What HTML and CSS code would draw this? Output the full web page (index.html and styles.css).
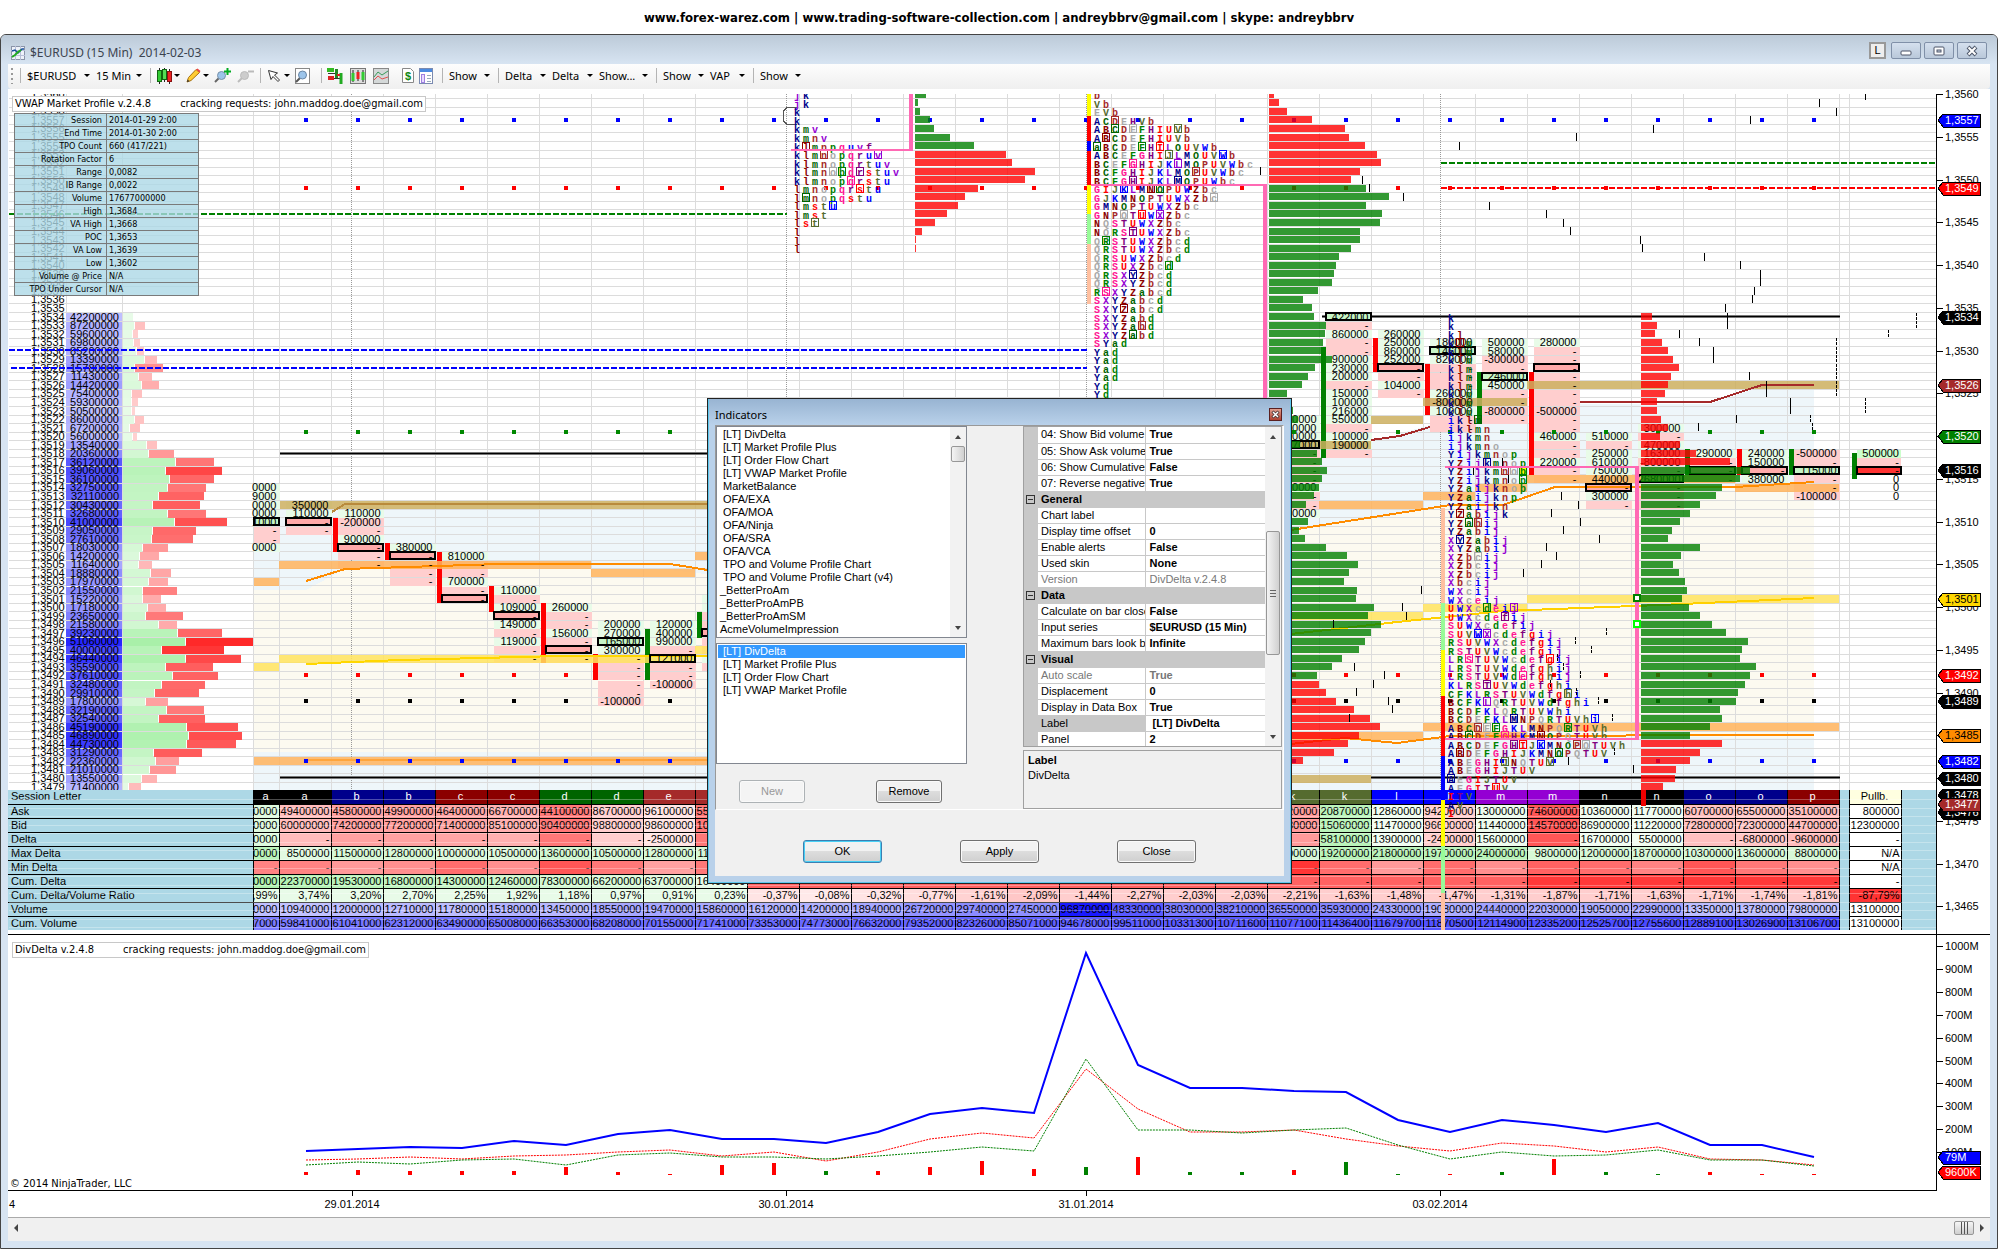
FILE: index.html
```html
<!DOCTYPE html>
<html lang="en">
<head>
<meta charset="utf-8">
<title>$EURUSD (15 Min) 2014-02-03</title>
<link rel="stylesheet" href="styles.css">
</head>
<body>
<header class="banner">www.forex-warez.com | www.trading-software-collection.com | andreybbrv@gmail.com | skype: andreybbrv</header>
<main class="window">
  <div class="titlebar">
    <svg class="app-icon" width="14" height="14" viewBox="0 0 14 14"><rect x=".5" y=".5" width="13" height="13" fill="#eef2fa" stroke="#8a94a8"/><path d="M0 4.500h14M0 9.500h14M4.500 0v14M9.500 0v14" stroke="#b9c0d8"/><path d="M1 5l3-1 3 3 4-4 2 0" stroke="#1a4f9c" stroke-width="1.500" fill="none"/><path d="M1 11l3-2 3-3 3-2" stroke="#22aa22" stroke-width="2" fill="none"/></svg>
    <h1 class="title">$EURUSD (15 Min)&nbsp; 2014-02-03</h1>
    <div class="win-buttons">
      <button class="link-btn" type="button">L</button>
      <button class="win-btn" type="button" aria-label="Minimize"><svg width="12" height="12" viewBox="0 0 12 12"><rect x="1" y="6" width="10" height="4" rx="1" fill="#fff" stroke="#4c5568"/></svg></button>
      <button class="win-btn" type="button" aria-label="Restore"><svg width="12" height="12" viewBox="0 0 12 12"><rect x="1" y="2" width="10" height="8" rx="1" fill="#fff" stroke="#4c5568"/><rect x="4" y="5" width="4" height="2" fill="#c9d6e6" stroke="#4c5568"/></svg></button>
      <button class="win-btn" type="button" aria-label="Close"><svg width="12" height="12" viewBox="0 0 12 12"><path d="M2 2l8 8M10 2l-8 8" stroke="#4c5568" stroke-width="4"/><path d="M2.500 2.500l7 7M9.500 2.500l-7 7" stroke="#fff" stroke-width="2"/></svg></button>
    </div>
  </div>
  <nav class="toolbar">
    <span class="grip"></span><span class="sep"></span>
    <button class="tb w69" type="button">$EURUSD</button>
    <button class="tb w52" type="button">15 Min</button>
    <span class="sep"></span>
    <button class="tb w29" type="button" aria-label="Chart style"><svg width="15" height="16" viewBox="0 0 15 16"><path d="M2.500 0v16M7.500 0v14M12.500 1v15" stroke="#222"/><rect x=".5" y="2.500" width="4" height="11" fill="#3c3" stroke="#161"/><rect x="5.500" y="1.500" width="4" height="10" fill="#5d5" stroke="#161"/><rect x="10.500" y="3.500" width="4" height="10" fill="#e22" stroke="#811"/></svg></button>
    <button class="tb w29" type="button" aria-label="Draw"><svg width="15" height="15" viewBox="0 0 15 15"><path d="M1 14l1.500-4.500L10 1.500l3.500 3L5 12.500z" fill="#fc3" stroke="#a67010"/><path d="M10 1.500l3.500 3 1-1.500-3-2.500z" fill="#e44"/><path d="M1 14l.7-2.500 1.800 1.800z" fill="#333"/></svg></button>
    <button class="tb w23 plain" type="button" aria-label="Zoom in"><svg width="17" height="15" viewBox="0 0 17 15"><path d="M1 14l5-5" stroke="#666" stroke-width="2"/><circle cx="7.500" cy="7.500" r="4" fill="#9cc4ea" stroke="#7890a8"/><path d="M13.500 0v7M10 3.500h7" stroke="#0a2" stroke-width="2"/></svg></button>
    <button class="tb w20 plain" type="button" aria-label="Zoom out"><svg width="17" height="15" viewBox="0 0 17 15"><path d="M1 14l5-5" stroke="#bbb" stroke-width="2"/><circle cx="7.500" cy="7.500" r="4" fill="#ccc" stroke="#bbb"/><path d="M11 3.500h6" stroke="#bbb" stroke-width="2"/></svg></button>
    <span class="sep"></span>
    <button class="tb w29" type="button" aria-label="Cursor"><svg width="14" height="14" viewBox="0 0 14 14"><path d="M1.500 1.500l9 2.500-3 2 5 5-1.500 1.500-5-5-2 3z" fill="#fff" stroke="#333"/></svg></button>
    <button class="tb w23 plain" type="button" aria-label="Data box"><svg width="15" height="16" viewBox="0 0 15 16"><rect x=".5" y=".5" width="14" height="15" fill="#fff" stroke="#888"/><path d="M1 14l4-4" stroke="#555" stroke-width="2"/><circle cx="7.500" cy="7" r="4" fill="#9cc4ea" stroke="#6a86a4"/></svg></button>
    <span class="sep"></span>
    <button class="tb w23 plain" type="button" aria-label="Chart trader"><svg width="16" height="16" viewBox="0 0 16 16"><path d="M1 5.500h9M3 10.500h10" stroke="#333"/><rect x="0" y="0" width="7" height="4" fill="#3b2"/><rect x="1" y="8" width="6" height="4" fill="#d22"/><path d="M9.500 1v9" stroke="#282" stroke-width="3"/><path d="M14 5v11" stroke="#2a2" stroke-width="3"/><path d="M10 7h3" stroke="#d22" stroke-width="2"/></svg></button>
    <button class="tb w23 plain" type="button" aria-label="Data series"><svg width="16" height="16" viewBox="0 0 16 16"><rect x=".5" y=".5" width="15" height="15" fill="#ddd" stroke="#777"/><path d="M3 2v12M8 2v11M13 2v12" stroke="#222"/><rect x="1.500" y="5" width="3" height="8" fill="#3c3"/><rect x="6.500" y="4" width="3" height="7" fill="#e22"/><rect x="11.500" y="4" width="3" height="8" fill="#3c3"/></svg></button>
    <button class="tb w23 plain" type="button" aria-label="Indicators"><svg width="16" height="16" viewBox="0 0 16 16"><rect x=".5" y=".5" width="15" height="15" fill="#d4d8d8" stroke="#888"/><path d="M1 9l4-5 4 3 6-4" stroke="#3a9a5a" fill="none"/><path d="M1 12l4-4 4 3 6-2" stroke="#e05050" fill="none"/></svg></button>
    <button class="tb w23 plain center" type="button" aria-label="Strategies"><svg width="12" height="15" viewBox="0 0 12 15"><path d="M.5.500h8l3 3v11H.5z" fill="#fff" stroke="#888"/><text x="3" y="12" class="dollar">$</text></svg></button>
    <button class="tb w20 plain" type="button" aria-label="Properties"><svg width="14" height="16" viewBox="0 0 14 16"><rect x=".5" y=".5" width="13" height="15" fill="#fff" stroke="#7a8ab0"/><rect x="1" y="1" width="12" height="3" fill="#4a8ae0"/><rect x="2.500" y="6.500" width="3" height="8" fill="#e8dcff" stroke="#a080e0"/><path d="M8 7.500h4M8 10.500h4M8 13.500h4" stroke="#9ab"/></svg></button>
    <span class="sep"></span>
    <button class="tb w47" type="button">Show</button><span class="sep"></span>
    <button class="tb w47" type="button">Delta</button>
    <button class="tb w47" type="button">Delta</button>
    <button class="tb w55" type="button">Show...</button><span class="sep"></span>
    <button class="tb w47" type="button">Show</button>
    <button class="tb w41" type="button">VAP</button><span class="sep"></span>
    <button class="tb w47" type="button">Show</button>
  </nav>

  <section class="chart">
    <div class="plots">
      <div class="price-panel">
        <svg id="price" class="canvas"></svg>
        <div class="tag tag-top">VWAP Market Profile v.2.4.8<span>cracking requests: john.maddog.doe@gmail.com</span></div>
        <table class="info">
          <tr><th>Session</th><td>2014-01-29 2:00</td></tr>
          <tr><th>End Time</th><td>2014-01-30 2:00</td></tr>
          <tr><th>TPO Count</th><td>660 (417/221)</td></tr>
          <tr><th>Rotation Factor</th><td>6</td></tr>
          <tr><th>Range</th><td>0,0082</td></tr>
          <tr><th>IB Range</th><td>0,0022</td></tr>
          <tr><th>Volume</th><td>17677000000</td></tr>
          <tr><th>High</th><td>1,3684</td></tr>
          <tr><th>VA High</th><td>1,3668</td></tr>
          <tr><th>POC</th><td>1,3653</td></tr>
          <tr><th>VA Low</th><td>1,3639</td></tr>
          <tr><th>Low</th><td>1,3602</td></tr>
          <tr><th>Volume @ Price</th><td>N/A</td></tr>
          <tr><th>TPO Under Cursor</th><td>N/A</td></tr>
        </table>
      </div>
      <div class="table-panel">
        <table id="stats" class="stats"></table>
        <svg id="overlay" class="canvas over"></svg>
      </div>
      <div class="delta-panel">
        <svg id="delta" class="canvas"></svg>
        <div class="tag tag-low">DivDelta v.2.4.8<span>cracking requests: john.maddog.doe@gmail.com</span></div>
        <p class="copyright">© 2014 NinjaTrader, LLC</p>
      </div>
    </div>
    <svg id="axis" class="axis"></svg>
  </section>
  <div class="dates"><svg id="dates" class="canvas"></svg></div>
  <div class="hscroll"><span class="arrow left"></span><span class="thumb"></span><span class="arrow right"></span></div>

  <section class="dialog" role="dialog" aria-label="Indicators">
    <div class="dialog-title"><h2>Indicators</h2><button class="dlg-close" type="button" aria-label="Close"><svg width="9" height="9" viewBox="0 0 9 9"><path d="M1.500 1.500l6 6M7.500 1.500l-6 6" stroke="#433" stroke-width="3"/><path d="M2 2l5 5M7 2l-5 5" stroke="#fff" stroke-width="1.500"/></svg></button></div>
    <div class="dialog-body">
      <div class="dialog-top">
        <div class="lists">
          <div class="list list-all">
            <ul>
              <li>[LT] DivDelta</li><li>[LT] Market Profile Plus</li><li>[LT] Order Flow Chart</li><li>[LT] VWAP Market Profile</li><li>MarketBalance</li><li>OFA/EXA</li><li>OFA/MOA</li><li>OFA/Ninja</li><li>OFA/SRA</li><li>OFA/VCA</li><li>TPO and Volume Profile Chart</li><li>TPO and Volume Profile Chart (v4)</li><li class="flush">_BetterProAm</li><li class="flush">_BetterProAmPB</li><li class="flush">_BetterProAmSM</li><li class="flush">AcmeVolumeImpression</li>
            </ul>
            <div class="vscroll"><span class="up"></span><span class="vthumb small"></span><span class="down"></span></div>
          </div>
          <div class="list list-used">
            <ul><li class="selected">[LT] DivDelta</li><li>[LT] Market Profile Plus</li><li>[LT] Order Flow Chart</li><li>[LT] VWAP Market Profile</li></ul>
          </div>
          <div class="list-actions"><button class="btn" type="button" disabled>New</button><button class="btn" type="button">Remove</button></div>
        </div>
        <div class="props">
          <div class="grid-box">
            <table class="grid">
              <tr><td class="gut"></td><th>04: Show Bid volume</th><td>True</td></tr>
              <tr><td class="gut"></td><th>05: Show Ask volume</th><td>True</td></tr>
              <tr><td class="gut"></td><th>06: Show Cumulative</th><td>False</td></tr>
              <tr><td class="gut"></td><th>07: Reverse negative</th><td>True</td></tr>
              <tr class="cat"><td class="gut"><i></i></td><th colspan="2">General</th></tr>
              <tr><td class="gut"></td><th>Chart label</th><td></td></tr>
              <tr><td class="gut"></td><th>Display time offset</th><td>0</td></tr>
              <tr><td class="gut"></td><th>Enable alerts</th><td>False</td></tr>
              <tr><td class="gut"></td><th>Used skin</th><td>None</td></tr>
              <tr class="off"><td class="gut"></td><th>Version</th><td class="thin">DivDelta v.2.4.8</td></tr>
              <tr class="cat"><td class="gut"><i></i></td><th colspan="2">Data</th></tr>
              <tr><td class="gut"></td><th>Calculate on bar close</th><td>False</td></tr>
              <tr><td class="gut"></td><th>Input series</th><td>$EURUSD (15 Min)</td></tr>
              <tr><td class="gut"></td><th>Maximum bars look back</th><td>Infinite</td></tr>
              <tr class="cat"><td class="gut"><i></i></td><th colspan="2">Visual</th></tr>
              <tr class="off"><td class="gut"></td><th>Auto scale</th><td>True</td></tr>
              <tr><td class="gut"></td><th>Displacement</th><td>0</td></tr>
              <tr><td class="gut"></td><th>Display in Data Box</th><td>True</td></tr>
              <tr class="cur"><td class="gut"></td><th>Label</th><td>&nbsp;[LT] DivDelta</td></tr>
              <tr><td class="gut"></td><th>Panel</th><td>2</td></tr>
            </table>
            <div class="vscroll"><span class="up"></span><span class="vthumb long"></span><span class="down"></span></div>
          </div>
          <div class="help"><b>Label</b><p>DivDelta</p></div>
        </div>
      </div>
      <div class="dialog-actions"><button class="btn wide default" type="button">OK</button><button class="btn wide" type="button">Apply</button><button class="btn wide" type="button">Close</button></div>
    </div>
  </section>
</main>
<script src="chart.js"></script>
</body>
</html>
```
FILE: styles.css
```css
* { box-sizing: border-box; }
body { margin: 0; background: #fff; color: #000; font: 11px/13px "Liberation Sans", Arial, sans-serif; overflow: hidden; }
button { font: inherit; color: inherit; padding: 0; margin: 0; }
h1, h2, p, ul { margin: 0; padding: 0; font-weight: normal; }
.banner { height: 34px; padding-top: 8px; text-align: center; font: bold 13px/20px "DejaVu Sans Condensed", "DejaVu Sans", sans-serif; }

.window { position: relative; height: calc(100vh - 34px); min-height: 1215px; display: flex; flex-direction: column; padding: 0 7px 7px; background: #d7e4f2; border: 1px solid #444; border-radius: 6px 6px 0 0; overflow: hidden; }
.titlebar { height: 29px; flex: none; display: flex; align-items: center; gap: 5px; margin: 0 -7px; padding: 6px 10px 0 10px; background: linear-gradient(#bccad8, #d7e4f2); }
.title { flex: 1; font: 12px/16px "Noto Sans", sans-serif; color: #3c4450; }
.win-buttons { display: flex; gap: 3px; margin-bottom: 4px; }
.link-btn { width: 17px; height: 17px; border: 2px solid #999; background: #eee; margin-right: 2px; }
.win-btn { width: 30px; height: 17px; display: flex; align-items: center; justify-content: center; border: 1px solid #8090a8; border-radius: 2px; background: linear-gradient(#d5e0ee, #b9c8da); }

.toolbar { height: 25px; flex: none; display: flex; align-items: center; background: linear-gradient(#fdfdfd, #efefef); border-radius: 0 0 4px 4px; padding: 0 0 2px 3px; }
.grip { width: 2px; height: 16px; background: repeating-linear-gradient(#999 0 2px, transparent 2px 5px); margin-right: 4px; }
.sep { width: 1px; height: 15px; background: #b4b4b4; margin: 0 5px 0 3px; }
.tb { display: flex; align-items: center; justify-content: space-between; height: 20px; border: 0; background: none; padding: 0 8px 0 1px; font: 11px/20px "Noto Sans", sans-serif; white-space: nowrap; }
.tb::after { content: ""; border: 3px solid transparent; border-top-color: #000; border-bottom: 0; margin-right: -3px; }
.tb.plain { padding: 0; }
.tb.plain::after { display: none; }
.tb.center { justify-content: center; }
.w20 { width: 20px; } .w23 { width: 23px; } .w29 { width: 29px; } .w41 { width: 41px; } .w47 { width: 47px; } .w52 { width: 52px; } .w55 { width: 55px; } .w69 { width: 69px; }
.dollar { font: bold 11px "Liberation Sans", sans-serif; fill: #181; }

.chart { flex: none; display: flex; background: #fff; padding-top: 5px; }
.plots { flex: 1; min-width: 0; }
.price-panel, .table-panel, .delta-panel, .dates { position: relative; }
.price-panel { height: 696px; }
.table-panel { height: 144px; }
.delta-panel { height: 257px; border-top: 1px solid #000; border-bottom: 1px solid #000; }
.canvas { display: block; width: 100%; height: 100%; }
.over { position: absolute; inset: 0; overflow: visible; pointer-events: none; }
.axis { flex: none; width: 54px; height: 1097px; background: #fff; position: relative; overflow: visible; }
.dates { height: 26px; flex: none; background: #fff; }
.tag { position: absolute; left: 4px; background: #fff; border: 1px solid #c8c8c8; height: 16px; padding: 0 2px; font: 11px/14px "DejaVu Sans Condensed", sans-serif; white-space: nowrap; }
.tag span { margin-left: 29px; }
.tag-top { top: 2px; }
.tag-low { top: 7px; }
.copyright { position: absolute; left: 2px; bottom: 0; font: 11px/13px "DejaVu Sans Condensed", sans-serif; }
.info { position: absolute; left: 6px; top: 19px; width: 185px; border-collapse: collapse; table-layout: fixed; background: rgba(173, 216, 230, .8); font: 9px/12px "DejaVu Sans Condensed", sans-serif; }
.info th, .info td { border: 1px solid #7a7a7a; height: 13px; padding: 0 4px 0 2px; font-weight: normal; }
.info th { width: 92px; text-align: right; }

.stats { width: 100%; border-collapse: collapse; table-layout: fixed; background: #add8e6; line-height: 13px; }
.stats td, .stats th { height: 14px; padding: 0 1px 0 0; border-right: 1px solid #000; border-bottom: 1px solid #000; text-align: right; font-weight: normal; overflow: hidden; white-space: nowrap; }
.stats th { text-align: left; padding-left: 3px; }
.stats tr:last-child td, .stats tr:last-child th { border-bottom: 0; }
.stats .letter { color: #fff; text-align: center; }
.stats .gap { background: #add8e6; border-bottom: 0; }
.stats .rest { border: 0; }
.stats .cut { direction: rtl; }
.stats .pull { text-align: center; background: #ffffe0; }

.hscroll { flex: 1; display: flex; align-items: center; background: #f0f0f0; border-top: 1px solid #aaa; padding: 0 6px 4px; }
.hscroll .thumb { width: 20px; height: 14px; margin-left: auto; margin-right: 6px; border: 1px solid #979797; border-radius: 2px; background: linear-gradient(90deg, transparent 6px, #555 6px 7px, transparent 7px 9px, #555 9px 10px, transparent 10px 12px, #555 12px 13px, transparent 13px), linear-gradient(#f6f6f6, #cfcfcf); }
.arrow { border: 4px solid transparent; }
.arrow.left { border-right-color: #444; border-left: 0; }
.arrow.right { border-left-color: #444; border-right: 0; }

.dialog { position: absolute; left: 50%; margin-left: -292px; top: 363px; width: 585px; height: 486px; padding: 0 7px 7px; border: 1px solid #222; background: #b9d1ea; box-shadow: inset 0 0 0 1px #5cc8ee; display: flex; flex-direction: column; }
.dialog-title { height: 26px; flex: none; display: flex; align-items: center; justify-content: space-between; margin: 0 -6px; padding: 5px 8px 0 6px; background: linear-gradient(#98b4d2, #b9d1ea); font: 11px/16px "Noto Sans", sans-serif; }
.dialog-title h2 { font-size: 11px; }
.dlg-close { width: 13px; height: 13px; display: flex; align-items: center; justify-content: center; border: 1px solid #5a2020; background: linear-gradient(#e0a090, #b04030); }
.dialog-body { flex: 1; background: #f0f0f0; display: flex; flex-direction: column; }
.dialog-top { height: 385px; display: flex; justify-content: space-between; border: 1px solid #999; border-right-color: #fff; border-bottom-color: #fff; padding-right: 1px; }
.lists { width: 251px; }
.list { display: flex; background: #fff; border: 1px solid #828790; }
.list ul { flex: 1; list-style: none; padding: 1px 0 0 1px; }
.list li { height: 13px; padding-left: 5px; white-space: nowrap; overflow: hidden; }
.list li.flush { padding-left: 2px; }
.list li.selected { background: #3399ff; color: #fff; margin-right: 1px; }
.list-all { height: 212px; }
.list-used { height: 121px; margin-top: 5px; }
.list-actions { display: flex; justify-content: space-between; padding: 16px 25px 0 23px; }
.btn { width: 66px; height: 23px; border: 1px solid #707070; border-radius: 3px; background: linear-gradient(#f2f2f2 50%, #dddddd 50%, #cfcfcf); box-shadow: inset 0 0 0 1px #fafafa; }
.btn:disabled { background: #f4f4f4; border-color: #adb2b5; color: #999; }
.btn.wide { width: 79px; }
.btn.default { border-color: #3c7fb1; box-shadow: inset 0 0 0 1px #48d0f5; }
.vscroll { width: 16px; flex: none; display: flex; flex-direction: column; align-items: center; background: #f2f2f2; padding: 8px 0 7px; }
.vscroll .up, .vscroll .down { border: 3px solid transparent; }
.vscroll .up { border-bottom: 4px solid #444; border-top: 0; }
.vscroll .down { border-top: 4px solid #444; border-bottom: 0; margin-top: auto; }
.vthumb { width: 14px; border: 1px solid #979797; border-radius: 2px; background: linear-gradient(90deg, #f4f4f4, #d0d0d0); }
.vthumb.small { height: 16px; margin-top: 7px; }
.vthumb.long { height: 124px; margin-top: 92px; background: linear-gradient(#666, #666) center 58px / 6px 1px no-repeat, linear-gradient(#666, #666) center 61px / 6px 1px no-repeat, linear-gradient(#666, #666) center 64px / 6px 1px no-repeat, linear-gradient(90deg, #f4f4f4, #d0d0d0); }
.props { width: 259px; display: flex; flex-direction: column; gap: 3px; }
.grid-box { height: 321px; display: flex; border: 1px solid #a0a0a0; overflow: hidden; }
.grid { flex: 1; min-width: 0; width: 100%; border-collapse: collapse; table-layout: fixed; background: #fff; height: 320px; }
.grid td, .grid th { height: 16px; padding: 0 0 0 4px; border-bottom: 1px solid #c8c8c8; text-align: left; white-space: nowrap; overflow: hidden; font-weight: bold; line-height: 15px; }
.grid th { font-weight: normal; padding-left: 3px; border-right: 1px solid #c8c8c8; width: 107px; }
.grid .gut { width: 14px; background: #c8c8c8; padding: 0 0 0 2px; }
.grid .gut i { display: block; width: 9px; height: 9px; border: 1px solid #333; background: linear-gradient(#333, #333) center / 5px 1px no-repeat; }
.grid .cat th, .grid .cur th { background: #c8c8c8; }
.grid .cat th { font-weight: bold; }
.grid .off th, .grid .off td { color: #777; }
.grid .off .thin { font-weight: normal; }
.help { flex: 1; border: 1px solid #a0a0a0; padding: 2px 4px; line-height: 15px; }
.dialog-actions { flex: 1; display: flex; justify-content: center; align-items: center; gap: 78px; padding-top: 17px; }

/* chart drawing */
.num { font: 11px "Liberation Sans", sans-serif; }
.tpo { font: bold 10px "Liberation Mono", monospace; text-anchor: middle; }
.big { font: 11px "Liberation Sans", sans-serif; text-anchor: middle; }
```
FILE: chart.js
```js
const ROW = 8.547, TOP = 94, LEFT = 8;
const y = p => 316.5 + (3534 - p) * ROW;
const el = id => document.getElementById(id);
const rect = (x, yy, w, h, f, o = '') => `<rect x="${x}" y="${yy}" width="${w}" height="${h}" fill="${f}" ${o}/>`;
const cell = (x1, x2, p, f, o = '') => rect(x1, Math.round(y(p) - 3.5), x2 - x1, 8, f, o);
const text = (x, yy, t, cls = 'num', o = '') => `<text x="${x}" y="${yy}" class="${cls}" ${o}>${t}</text>`;
const line = (pts, c, w, o = '') => `<polyline points="${pts}" fill="none" stroke="${c}" stroke-width="${w}" ${o}/>`;
const red = a => `rgb(255,${Math.round(255 - 225 * a)},${Math.round(255 - 225 * a)})`;
const green = a => `rgb(${Math.round(255 - 115 * a)},${Math.round(255 - 20 * a)},${Math.round(255 - 115 * a)})`;
const blue = a => `rgb(${Math.round(255 - 255 * a)},${Math.round(255 - 255 * a)},255)`;
const colX = c => 279.5 + 52 * c;
const TAN = '#cdaf5f', ORANGE = '#ffb35c', GOLD = '#ffe35e', PINK = '#ff69b4';

/* volume ladder on the left: volume, end of bid part, end of ask part */
const ladder = [
[42200000,133,133],[87200000,134,145],[59600000,132,138],[69800000,133,140],[85200000,136,144],[13390000,144,157],[15780000,134,163],[11430000,138,152],[14420000,141,159],[75400000,131,142],[59300000,131,138],[50500000,131,135],[86000000,134,144],[67200000,129,140],[56000000,132,137],[13540000,146,157],[20360000,148,174],[36120000,175,214],[39060000,165,222],[36100000,169,214],[32750000,167,206],[32110000,158,204],[30430000,152,200],[32680000,167,206],[41000000,174,227],[29050000,152,196],[27610000,151,193],[18030000,142,168],[14200000,139,159],[11640000,138,152],[18880000,150,171],[17970000,148,168],[21550000,142,177],[15220000,142,161],[17180000,147,166],[23650000,145,183],[21580000,158,177],[39230000,177,222],[51060000,185,253],[40000000,161,224],[46440000,185,241],[35590000,165,213],[37610000,172,218],[32480000,161,205],[29910000,154,199],[17800000,145,168],[32190000,166,204],[32540000,158,205],[45190000,186,238],[46890000,188,242],[44730000,186,236],[31290000,153,202],[22360000,155,179],[21010000,149,176],[13550000,141,157],[71400000,128,141]];

/* order-flow bars: column, first price, values (* = most traded), bar [colour, from, to] */
const flow = [
[-1,3514,'0000 9000 0000 0000 *1000 - - 0000'],
[0,3512,'350000 110000 *- -'],
[1,3511,'110000 -200000 - 900000 *- - -','red',3510,3507],
[2,3507,'380000 *- - - -','red',3507,3506],
[3,3506,'810000 - - 700000 - *-','red',3506,3501],
[4,3502,'110000 - 109000 *- 149000 - 119000 - -','red',3502,3500],
[5,3500,'260000 - - 156000 - *- -','red',3500,3494],
[6,3498,'200000 270000 *165000 300000 - - - - - -100000','red',3494,3492],
[7,3498,'120000 400000 990000 - *121000 - - -100000','green',3497,3492],
[8,3501,'260000 310000 - - *- - - 110000 -','green',3499,3497],
[19,3522,'110000 200000 310000 *177000 - - - - 100000 - - 240000'],
[20,3534,'*422000 - 860000 - - 900000 230000 200000 - 150000 100000 216000 550000 - 100000 190000 -','green',3530,3518],
[21,3532,'260000 250000 860000 252000 *- - 104000 -','red',3531,3528],
[22,3531,'180000 *146000 820000 - - - 260000 -800000 100000 - -','red',3528,3523],
[23,3531,'500000 580000 -300000 - *246000 450000 - - -800000 -','green',3527,3522],
[24,3531,'280000 - - *- - - - - -500000 - - 460000 - - 220000 - -','red',3527,3516],
[25,3520,'510000 - 250000 610000 750000 440000 *- 300000 -'],
[26,3521,'300000 - 470000 163000 -800000 - *2680000 - - -'],
[27,3518,'290000 - *- -','green',3518,3516],
[28,3518,'240000 150000 *- 380000','red',3518,3516],
[29,3518,'-500000 - *115000 - - -100000','green',3518,3516]];

const tpoColors = ['#00008b','#8b0000','#006400','#a52a2a','#a9a9a9','#008000','#ff1493','#800080','#ff0000','#556b2f','#0000ff','#9400d3'];
const tpoIndex = ch => (ch >= 'a' ? ch.charCodeAt(0) - 71 : ch.charCodeAt(0) - 65) % 12;
const profiles = [
[797,3560,'jk jk k k kmv kmnv k*lmnpquvf klm*nopqru*v klmnopqrtuv klmn*o*pq*rstuv klmnop*qrstu lmnopqr*stu l*mnopqstu lmst*u lmst ls*t l l l'],
[1097,3560,'b Vb EVb AC*DEHVb AB*CD*EFHIU*Vb A*BCDEFHIUVb *aBCDE*FH*ILOUVWb ABCEFGHI*JLMOUV*Wb BCEF*GHIJK*LMOPUVWbc BCFGHIJKLMO*PUVWbc BCFG*HIJKL*MOPUWbc GIJ*KLM*N*OPUWZbc GJKMNOPTUWXZb*c GMNOPTUWXZbc GNP*QT*UW*XZbc NQSTUWXZbc NQRS*TUWXZbc Q*RSTUWXZbcd QRSTUWXZbcd QRSUWXZbcd QRSUXZbc*d QRSX*YZbcd QRSXYZbcd R*SXYZabcd SXYZabcd SXY*Zabcd SXYZabd SXYZa*bd SXYZ*abd SYad Yad Yad Yad Yad Yd Yd'],
[1451,3534,'k k kl k*lm klm klm klm klm klm klm klm klm ikl*m iklmn ijkmn ijkmno Yijkmnop YZij*kmnop YZijkm*n*o*p YZijkmno*p YZaijknop YZaijknp YZaijkn Y*Zabijk YZ*a*bij YZabij X*YZabij XYZabij XZb*cij XZbcij XZbcij Xbcij WXcij WXceij UWXc*dei*j UWXcde*fij SUWXcdefij SUV*W*Xcdefgij RSUVWXcdefgij RSTUVWcdefgij LR*STUVWcdef*gij LRSTUVWdefghij LRSTUVWd*efghij KLRS*TUVWdefghi CFKLRSTUVWdfg*hi BCFK*LQRTUVWdfghi BCDFKLQRTUVWhi BCDEFKL*MNPQRTUVh*i ABC*D*E*FGKLMNPQ*RTUVh AB*CDEF*GHKM*NOPQTUVh ABCDEFG*H*IJ*KMNO*P*QTUVh A*BDEFGHIJKMN*OPQTUV ABEGHI*JNQTU*V ABEGHIJTUV *AEGIJTUV AEGIT*UV ITV AV I']];

/* volume profiles: x, first price, ends of the bars, index range painted green */
const volumes = [
[915,3560,[926,918,920,930,934,950,974,1006,1012,1035,1025,978,965,958,947,935,922,916,916],0,6],
[1269,3560,[1274,1279,1287,1312,1345,1349,1365,1377,1381,1360,1351,1366,1389,1366,1382,1380,1360,1360,1351,1339,1336,1334,1332,1318,1303,1312,1314,1326,1325,1323,1325,1332,1315,1308,1302,1287,1280,1293,1298,1280,1285,1300,1317,1322,1327,1322,1319,1314,1306,1280,1308,1299,1305,1326,1347,1358,1349,1344,1357,1356,1374,1368,1381,1371,1365,1359,1342,1332,1317,1319,1326,1336,1354,1370,1380,1359,1348,1334,1303],11,68],
[1641,3534,[1652,1657,1655,1662,1668,1673,1679,1671,1668,1665,1657,1657,1661,1668,1660,1680,1696,1730,1750,1740,1722,1716,1700,1690,1680,1672,1668,1700,1681,1673,1679,1685,1687,1682,1689,1700,1712,1726,1748,1742,1740,1756,1750,1745,1738,1736,1720,1722,1710,1690,1722,1700,1690,1676,1675,1663],18,49]];

const ticks = [[1865,96],[1819,103],[1836,112],[1750,120],[1653,129],[1576,137],[1546,214],[1563,223],[1570,231],[1640,240],[1642,248],[1704,257],[1740,265],[1760,274],[1760,282],[1754,291],[1752,299],[1725,308],[1727,317],[1727,325],[1679,334],[1699,342],[1713,351],[1713,359],[1749,376],[1766,385],[1766,393],[1790,402],[1790,410],[1736,419],[1698,427],[1260,171],[1362,180],[1369,188],[1403,197],[1489,206],[1459,146],[1502,462],[1473,471],[1508,479],[1561,496],[1578,505],[1551,513],[1580,522],[1563,530],[1599,539],[1546,547],[1556,556],[1541,564],[1523,573],[1421,590],[1402,607],[1406,616],[1333,624],[1354,667],[1384,675],[1373,684],[1356,692],[1388,701],[1392,709],[1349,718],[1568,761],[1633,769]];
const dashes = [[1916,317],[1916,325],[1888,334],[1836,342],[1836,351],[1836,359],[1836,368],[1836,376],[1836,385],[1836,393],[1865,402],[1865,410],[1810,419],[1812,427],[1606,632],[1575,641],[1591,650],[1557,658],[1563,667],[1580,675],[1550,684],[1576,692],[1598,701],[1612,718],[1614,752]];

function gridLines(from, to, color, o) {
  let s = '';
  for (let p = from; p >= to; p--) s += rect(9, Math.round(y(p) + 4), 1928, 1, color, o);
  return s;
}
function columnLines(h) {
  let s = '';
  for (const x of [66, 122, 253, 1849]) s += rect(x, TOP, 1, h, '#dcdcdc');
  for (let c = 0; c <= 30; c++) s += rect(279 + 52 * c, TOP, 1, h, '#dcdcdc');
  return s;
}
function dots(p, color, from = 0, to = 29, skip = []) {
  let s = '';
  for (let k = from; k <= to; k++) if (!skip.includes(k)) s += rect(304 + 52 * k, Math.round(y(p)) - 2, 4, 4, color);
  return s;
}
function profileText([x, first, rows], from, to) {
  let s = '';
  rows.split(' ').forEach((row, i) => {
    const p = first - i;
    if (i < from || i >= to) return;
    let xi = x, boxed = false;
    for (const ch of row) {
      if (ch === '*') { boxed = true; continue; }
      const color = tpoColors[tpoIndex(ch)], yy = Math.round(y(p));
      if (boxed) s += `<rect x="${xi - 3.5}" y="${yy - 3.5}" width="7" height="8" fill="none" stroke="${color}"/>`;
      s += text(xi, yy + 5, ch, 'tpo', `fill="${color}"`);
      xi += 9; boxed = false;
    }
  });
  return s;
}

function drawPrice() {
  let s = '';
  const area = (pts, f) => `<polygon points="${pts}" fill="${f}"/>`;
  /* value areas */
  s += rect(254, 508, 460, 282, '#eef6fa');
  s += area('254,590 306,590 345,569 660,569 714,575 714,752 254,752', '#fcfaf0');
  s += area('1280,448 1371,442 1423,427 1475,410 1579,404 1710,404 1762,386 1814,386 1814,790 1280,790', '#eef6fa');
  s += area('1280,533 1450,505 1503,505 1555,487 1814,487 1814,738 1450,736 1397,743 1345,738 1280,744', '#fcfaf0');
  s += gridLines(3560, 3479, '#dcdcdc') + columnLines(696);
  for (const x of [351, 786, 1086, 1440]) s += `<line x1="${x}.5" x2="${x}.5" y1="94" y2="790" stroke="#999" stroke-dasharray="1 1"/>`;

  for (let p = 3560; p >= 3479; p--) s += text(31, Math.round(y(p)) + 4, '1,' + p);
  ladder.forEach(([v, a, b], i) => {
    const p = 3534 - i, t = (b - 123) / 130;
    s += cell(66, 122, p, blue(.2 + .65 * t)) + cell(123, a, p, green(.15 + .6 * t)) + cell(a + 1, b, p, red(.15 + .8 * (b - a) / 68));
    s += text(119, Math.round(y(p)) + 4, v, 'num', 'text-anchor="end"');
  });
  /* session highs and lows */
  for (const [a, b, yy] of [[280,714,453],[280,714,777],[1322,1840,316],[1371,1840,777]]) s += rect(a, yy - 1, b - a, 3, '#777') + rect(a, yy, b - a, 1, '#000');

  /* footprint cells; their values are drawn over the value-area bands */
  let values = '';
  for (const [c, first, vals, bar, from, to] of flow) {
    const x = colX(c);
    if (bar) s += rect(x + 1, Math.round(y(from) - 4), 5, Math.round((from - to + 1) * ROW), bar);
    vals.split(' ').forEach((v, i) => {
      const p = first - i, poc = v[0] === '*';
      v = v.replace('*', '');
      const neg = v[0] === '-', x1 = c < 0 ? 254 : x + 6;
      s += cell(x1, x + 52, p, neg ? red(poc ? .38 : .22) : green(poc ? .5 : .2));
      if (poc) values += `<rect x="${x1}" y="${Math.round(y(p) - 3.5)}" width="${x + 51 - x1}" height="7" fill="none" stroke="#000" stroke-width="2"/>`;
      values += text(x + 49, Math.round(y(p)) + 4, v, 'num', 'text-anchor="end"');
    });
  }
  const bands = [[280,714,3512,TAN],[254,279,3503,ORANGE],[279,591,3505,ORANGE],[591,695,3504,ORANGE],[695,714,3506,ORANGE],[254,279,3493,GOLD],[279,695,3494,GOLD],[695,714,3495,GOLD],[254,714,3482,ORANGE],
    [1280,1371,3519,TAN],[1371,1423,3522,TAN],[1423,1527,3524,TAN],[1527,1839,3526,TAN],[1319,1423,3512,ORANGE],[1423,1475,3513,ORANGE],[1475,1527,3514,ORANGE],[1527,1735,3515,ORANGE],[1735,1839,3514,ORANGE],
    [1291,1423,3499,GOLD],[1423,1527,3500,GOLD],[1527,1839,3501,GOLD],[1291,1423,3485,ORANGE],[1423,1475,3486,ORANGE],[1475,1527,3485,ORANGE],[1527,1839,3486,ORANGE],[1280,1371,3480,TAN]];
  for (const [a, b, p, f] of bands) s += cell(a, b, p, f, 'opacity=".85"');
  s += line('306,581 345,569 500,564 670,564 714,571', '#ff8c00', 2) + line('306,664 400,660 560,656 714,656', '#ffd700', 2) + line('306,760 714,760', '#ffa53c', 2);
  s += line('332,512 345,504 714,504', '#b98a3c', 2);
  s += line('1291,530 1450,505 1503,505 1555,487 1735,487 1814,482', '#ff8c00', 2) + line('1291,634 1397,622 1503,611 1660,605 1814,598', '#ffd000', 2);
  s += line('1291,744 1345,738 1397,743 1450,736 1814,735', '#ff8c00', 2) + line('1371,440 1400,436 1430,427', '#a52a2a', 2) + line('1580,402 1710,402 1762,385 1814,385', '#a52a2a', 2);
  s += values;
  s += dots(3557, '#00f') + dots(3549, '#f00') + dots(3492, '#f00', 0, 29, [6, 7]) + dots(3489, '#000', 0, 29, [6]) + dots(3482, '#00f') + dots(3520.5, '#080', 0, 29, [20]);

  /* session levels */
  const dash = (a, b, yy, c) => `<line x1="${a}" x2="${b}" y1="${yy}" y2="${yy}" stroke="${c}" stroke-width="2" stroke-dasharray="6 2"/>`;
  s += dash(9, 787, 214, '#008000') + dash(9, 1087, 350, '#00f') + dash(11, 1087, 368, '#00f') + dash(1441, 1936, 163, '#008000') + dash(1441, 1936, 188, '#f00');
  const stripes = [[1087,94,22,'#ff0'],[1087,116,69,'#f00'],[1087,141,10,'#00f'],[1087,185,29,'#ff0'],[1087,214,30,'#98fb98'],[1087,244,60,'#ffc0a0'],
    [1441,508,95,'#ffc0a0'],[1441,603,47,'#98fb98'],[1441,650,46,'#ff0'],[1441,696,60,'#f00'],[1441,756,34,'#00f']];
  for (const [x, yy, h, f] of stripes) s += rect(x, yy, 4, h, f);
  s += `<path d="M797 107.500h-10l-4 4v9l4 4h10" fill="none" stroke="#555"/>`;

  s += rect(1519, 467, 7, 8, '#ff0');
  profiles.forEach(p => s += profileText(p, 0, p[1] - 3478));
  for (const [x, first, ends, g1, g2] of volumes)
    ends.forEach((e, i) => {
      const top = Math.max(94, Math.round(y(first - i) - 3.5));
      s += rect(x, top, e - x, Math.round(y(first - i) - 3.5) + 7 - top, i >= g1 && i <= g2 ? '#008000' : '#f00', 'opacity=".8"');
    });
  for (const [x, yy] of ticks) s += rect(x, yy - 4, 1, 8, '#000');
  for (const [x, yy] of dashes) s += `<line x1="${x}.5" x2="${x}.5" y1="${yy - 4}" y2="${yy + 4}" stroke="#000" stroke-dasharray="3 1"/>`;
  s += line('791,150 911,150', PINK, 2) + line('911,94 911,151', PINK, 4) + line('1091,185 1265,185', PINK, 2) + line('1265,184 1265,420', PINK, 4);
  s += line('1445,467 1637,467', PINK, 2) + line('1637,466 1637,740', PINK, 4) + line('1445,739 1639,739', PINK, 2);
  s += `<rect x="1634" y="595" width="6" height="6" fill="#fff" stroke="#008000" stroke-width="2"/><rect x="1634" y="621" width="6" height="6" fill="#fff" stroke="#0f0" stroke-width="2"/>`;
  /* running pullback bar */
  s += rect(1852, 453, 5, 26, '#008000');
  ['500000', '-', '*-', '0', '0', '0'].forEach((v, i) => {
    const p = 3518 - i, poc = v[0] === '*';
    if (i < 3) s += cell(1857, 1901, p, poc ? '#f33' : i ? '#fcc' : '#cfc');
    if (poc) s += `<rect x="1857" y="${Math.round(y(p) - 3.5)}" width="44" height="7" fill="none" stroke="#000" stroke-width="2"/>`;
    s += text(1899, Math.round(y(p)) + 4, v.replace('*', ''), 'num', 'text-anchor="end"');
  });
  el('price').innerHTML = `<g transform="translate(-${LEFT},-${TOP})" shape-rendering="crispEdges">${s}</g>`;
}

function drawStats() {
  const letters = 'aabbccddeeffgghhiijjkkllmmnnoop'.split('');
  const letterBg = ['#000','#00008b','#8b0000','#006400','#a52a2a','#696969','#008000','#c71585','#800080','#f00','#556b2f','#0000ff','#9400d3','#000','#00008b','#8b0000'];
  const mid = Array(10).fill('');
  const rows = {
    'Ask': ['0000','49400000','45800000','49900000','46400000','66700000','44100000','86700000','96100000','55900000',...mid,'17020000','20870000','12860000','94200000','13000000','74600000','10360000','11770000','60700000','65500000','35100000','800000'],
    'Bid': ['0000','60000000','74200000','77200000','71400000','85100000','90400000','98800000','98600000','10270000',...mid,'19530000','15060000','11470000','96600000','11440000','14570000','86900000','11220000','72800000','72300000','44700000','12300000'],
    'Delta': ['0000','-','-','-','-','-','-','-','-2500000','-',...mid,'-','58100000','13900000','-2400000','15600000','-','16700000','5500000','-','-6800000','-9600000','-'],
    'Max Delta': ['0000','8500000','11500000','12800000','10000000','10500000','13600000','10500000','12800000','11000000',...mid,'10000000','19200000','21800000','19700000','24000000','9800000','12000000','18700000','10300000','13600000','8800000','N/A'],
    'Min Delta': [...Array(31).fill('-'),'N/A'],
    'Cum. Delta': ['0000','22370000','19530000','16800000','14300000','12460000','78300000','66200000','63700000','16400000',...Array(21).fill('-'),'-'],
    'Cum. Delta/Volume Ratio': ['3,99%','3,74%','3,20%','2,70%','2,25%','1,92%','1,18%','0,97%','0,91%','0,23%','-0,37%','-0,08%','-0,32%','-0,77%','-1,61%','-2,09%','-1,44%','-2,27%','-2,03%','-2,03%','-2,21%','-1,63%','-1,48%','-1,47%','-1,31%','-1,87%','-1,71%','-1,63%','-1,71%','-1,74%','-1,81%','-87,79%'],
    'Volume': ['0000','10940000','12000000','12710000','11780000','15180000','13450000','18550000','19470000','15860000','16120000','14200000','18940000','26720000','29740000','27450000','96870000','48330000','38030000','38210000','36550000','35930000','24330000','19080000','24440000','22030000','19050000','22990000','13350000','13780000','79800000','13100000'],
    'Cum. Volume': ['7000','59841000','61041000','62312000','63490000','65008000','66353000','68208000','70155000','71741000','73353000','74773000','76632000','79352000','82326000','85071000','94678000','99511000','10331300','10711600','11077100','11436400','11679700','11870500','12114900','12335200','12525700','12755600','12889100','13026900','13106700','13100000']
  };
  /* colour strength of each column */
  const d = [.3,-.3,-.42,-.42,-.4,-.35,-.6,-.22,-.12,-.6,0,0,0,0,0,0,0,0,0,0,-.45,.6,.12,-.22,.15,-.75,.12,.12,-.28,-.25,-.3];
  const mn = [-.55,-.55,-.45,-.5,-.65,-.5,-.75,-.6,-.42,-.6,-.5,-.5,-.5,-.5,-.5,-.5,-.5,-.5,-.5,-.5,-.9,-.65,-.45,-.65,-.5,-.7,-.65,-.55,-.75,-.6,-.5];
  const vol = [.25,.24,.26,.27,.26,.3,.28,.34,.35,.33,.3,.3,.34,.42,.45,.44,.9,.65,.52,.52,.5,.48,.36,.32,.36,.34,.32,.35,.26,.26,.24];
  const shade = (row, i) => {
    if (row === 'Max Delta') return green([.6,.25,.35,.35,.3,.3,.4][i] || (i > 20 && i < 25 ? .6 : .35));
    if (row === 'Min Delta') return red(-mn[i]);
    if (row === 'Cum. Delta') return i < 9 ? green(.7 - i * .05) : i === 9 ? green(.2) : red(i > 24 ? .88 : .7);
    if (row === 'Cum. Delta/Volume Ratio') return i < 10 ? '#e8fbe8' : red([.12,.1,.12,.15,.2,.25,.22][i - 10] || .22);
    if (row === 'Volume') return blue(vol[i]);
    if (row === 'Cum. Volume') return blue(.52 + i * .007);
    return d[i] < 0 ? red(-d[i]) : green(d[i]);
  };
  let h = '<colgroup><col style="width:245px"><col style="width:26px">' + '<col style="width:52px">'.repeat(30) + '<col style="width:10px"><col style="width:52px"><col></colgroup>';
  h += '<tr><th>Session Letter</th>';
  letters.forEach((l, i) => h += `<td class="letter" style="background:${letterBg[Math.floor(i / 2)]}">${l}</td>`);
  h += '<td class="gap"></td><td class="pull">Pullb.</td><td class="rest"></td></tr>';
  for (const [name, vals] of Object.entries(rows)) {
    h += `<tr><th>${name}</th>`;
    vals.slice(0, 31).forEach((v, i) => h += `<td${i ? '' : ' class="cut"'} style="background:${shade(name, i)}">${v}</td>`);
    const pv = vals[31];
    h += `<td class="gap"></td><td style="background:${pv[0] === '-' && pv[1] ? '#f33' : '#fff'}">${pv}</td><td class="rest"></td></tr>`;
  }
  el('stats').innerHTML = h;
  let s = gridLines(3478, 3463, '#fff', 'opacity=".3"');
  s += rect(1441, 790, 4, 10, '#00f') + rect(1441, 800, 4, 46, '#ff0') + rect(1441, 846, 4, 47, '#98fb98') + rect(1441, 893, 4, 37, '#ffc0a0');
  s += rect(1641, 790, 5, 16, '#e00');
  s += profileText(profiles[2], 56, 59);
  el('overlay').innerHTML = `<g transform="translate(-${LEFT},-790)" shape-rendering="crispEdges">${s}</g>`;
}

function drawDelta() {
  const K = 1.2745;
  const series = a => a.map((v, i) => `${306 + 52 * i},${Math.round(v * K)}`).join(' ');
  const total = [903,901.5,900,901,895,898,890,887,894,893.500,897,888,874,869,873,748,836,854,854,856,857,878.500,888,878.500,882.500,888,881,898,898,908];
  const bid = [910,909,908,909,907,906,904,902,907,904,911,904,894,889,893,839,870,888,888,887,894,899,903,897,899,904,900,909,910,914];
  const ask = [914,912,913,910,909,914,906,905,908,908,909,907,904,900,903,831,887,887,889,887,885,898,909,904,907,906,902,910,910,915];
  const bars = [[2,'r'],[4,'r'],[3,'r'],[3,'r'],[3,'r'],[6,'r'],[2,'r'],[1,'r'],[8,'r'],[9,'r'],[3,'g'],[3,'r'],[6,'r'],[11,'r'],[5,'r'],[6,'g'],[14,'r'],[2,'g'],[2,'g'],[4,'r'],[10,'g'],[1,'g'],[1,'r'],[2,'g'],[12,'r'],[2,'g'],[1,'g'],[2,'r'],[1,'r'],[1,'r']];
  let s = '';
  bars.forEach(([v, c], i) => s += rect(304 + 52 * i, Math.round(1175 - v * 1.3), 4, Math.round(v * 1.3), c === 'r' ? '#f00' : '#008000'));
  s += line(series(bid), '#f00', 1, 'stroke-dasharray="2 1"') + line(series(ask), '#008000', 1, 'stroke-dasharray="2 1"') + line(series(total), '#00f', 2);
  el('delta').innerHTML = `<g transform="translate(-${LEFT},-935)">${s}</g>`;
}

function drawAxis() {
  let s = rect(1936, 94, 1, 1097, '#000');
  for (let p = 3560; p >= 3465; p -= 5) s += rect(1937, Math.round(y(p)), 6, 1, '#000') + text(1945, Math.round(y(p)) + 4, '1,' + p);
  for (let v = 1000; v > 0; v -= 100) { const yy = Math.round(946 + (1000 - v) * .229); s += rect(1937, yy, 6, 1, '#000') + text(1945, yy + 4, v + 'M'); }
  s += rect(1936, 934, 54, 1, '#000');
  const tag = (yy, t, f, c = '#fff') => `<path d="M1938 ${yy}l5 -6h37v13h-37z" fill="${f}" stroke="#000"/>` + text(1945, yy + 4, t, 'num', `fill="${c}"`);
  [[3557,'#00f'],[3549,'#f00'],[3534,'#000'],[3526,'#a52a2a'],[3520,'#008000'],[3516,'#000'],[3501,'#ffd700','#000'],[3492,'#f00'],[3489,'#000'],[3485,'#ff8c00','#000'],[3482,'#00f'],[3480,'#000'],[3478,'#000'],[3476,'#000'],[3477,'#a52a2a']]
    .forEach(([p, f, c]) => s += tag(Math.round(y(p)), '1,' + p, f, c));
  s += tag(1157, '79M', '#00f') + tag(1172, '9600K', '#f00');
  el('axis').innerHTML = `<g transform="translate(-1936,-94)" shape-rendering="crispEdges">${s}</g>`;
}

function drawDates() {
  let s = text(12, 1208, '4', 'big');
  for (const [x, t] of [[352, '29.01.2014'], [786, '30.01.2014'], [1086, '31.01.2014'], [1440, '03.02.2014']]) s += rect(x, 1191, 1, 5, '#000') + text(x, 1208, t, 'big');
  el('dates').innerHTML = `<g transform="translate(-${LEFT},-1191)">${s}</g>`;
}

drawPrice(); drawStats(); drawDelta(); drawAxis(); drawDates();
```
